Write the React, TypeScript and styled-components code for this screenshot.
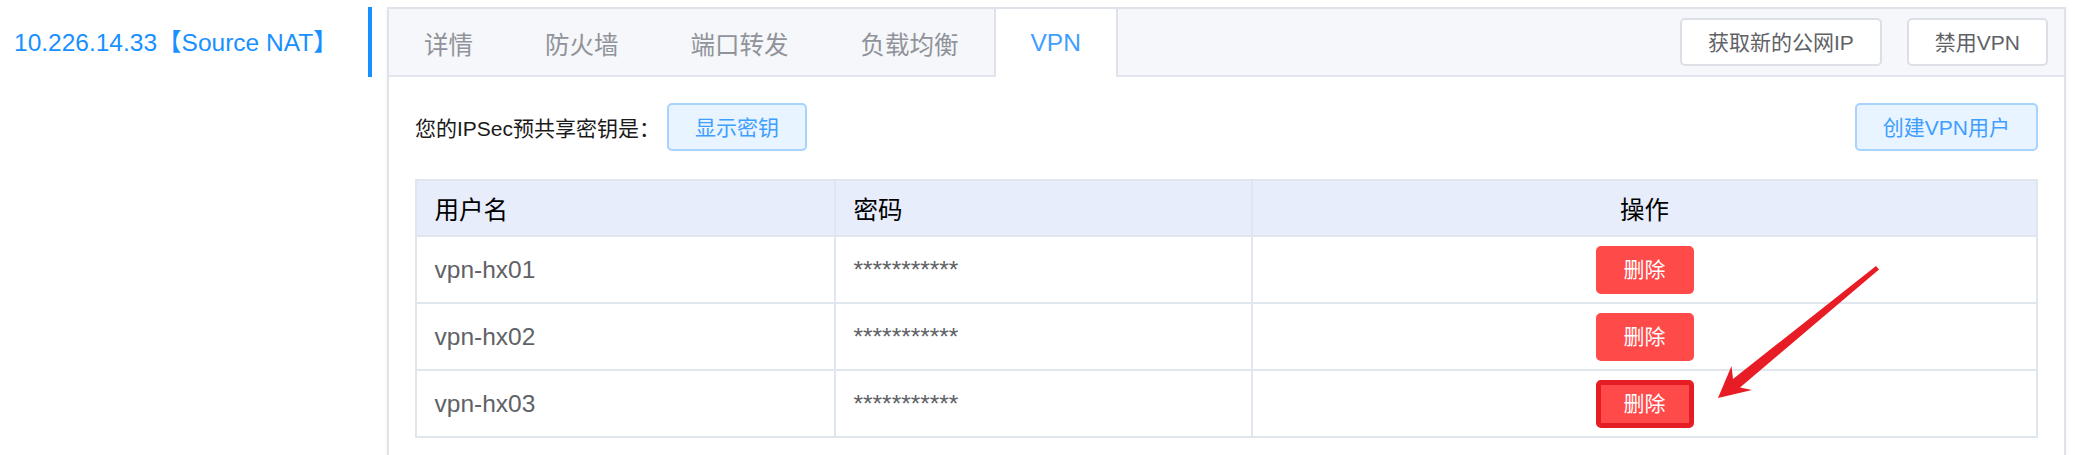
import React from 'react'
import styled, { createGlobalStyle, css } from 'styled-components'

const FONT = `"Liberation Sans", Arial, "Noto Sans CJK SC", sans-serif`

const GlobalStyle = createGlobalStyle`
    html, body {
        margin: 0;
        padding: 0;
        background: #ffffff;
        overflow: hidden;
        font-family: ${FONT};
    }
`

const Page = styled.div`
    position: relative;
    display: flex;
    align-items: flex-start;
    padding-top: 7px;
    width: 2075px;
    height: 455px;
    box-sizing: border-box;
`

const Sidebar = styled.nav`
    flex: none;
    width: 372px;
`

const MenuItem = styled.div<{ active?: boolean }>`
    height: 70px;
    box-sizing: border-box;
    display: flex;
    align-items: center;
    padding: 0 0 4px 14px;
    font-size: 24.5px;
    color: #1890ff;
    border-right: 4px solid ${p => (p.active ? '#1890ff' : 'transparent')};
    white-space: nowrap;
`

const Panel = styled.section`
    flex: 1;
    margin: 0 9px 0 15px;
    border: 2px solid #dfe2e8;
    background: #ffffff;
    box-shadow: 0 2px 4px rgba(0, 0, 0, 0.06);
`

const TabHeader = styled.div`
    display: flex;
    height: 68px;
    box-sizing: border-box;
    background: #f5f7fa;
    border-bottom: 2px solid #e2e5eb;
`

const TabList = styled.div`
    display: flex;
    height: 66px;
`

const Tab = styled.div<{ active?: boolean }>`
    height: 68px;
    box-sizing: border-box;
    display: flex;
    align-items: center;
    padding: 0 35px;
    margin-left: -2px;
    border-style: solid;
    border-width: 0 2px;
    border-color: transparent;
    font-size: 24.5px;
    color: #909399;
    white-space: nowrap;

    ${p =>
        p.active &&
        css`
            color: #409eff;
            background: #ffffff;
            border-color: #dfe2e8;
        `}
`

const HeaderActions = styled.div`
    margin-left: auto;
    align-self: center;
    display: flex;
    gap: 25px;
    padding-right: 16px;
`

const Button = styled.button`
    height: 48px;
    box-sizing: border-box;
    display: inline-flex;
    align-items: center;
    justify-content: center;
    padding: 0 26px;
    border: 2px solid #dcdfe6;
    border-radius: 5px;
    background: #ffffff;
    color: #606266;
    font-family: ${FONT};
    font-size: 21px;
    line-height: 1;
    white-space: nowrap;
    cursor: pointer;
`

const LightButton = styled(Button)`
    background: #e8f4ff;
    border-color: #a9d3ff;
    color: #409eff;
`

const DangerButton = styled(Button)<{ highlighted?: boolean }>`
    background: #ff4a4a;
    border-color: #ff4a4a;
    color: #ffffff;

    ${p =>
        p.highlighted &&
        css`
            border-color: #e61c24;
            box-shadow: inset 0 0 0 3px #e61c24;
        `}
`

const Content = styled.div`
    padding: 26px;
`

const KeyRow = styled.div`
    display: flex;
    align-items: center;
    justify-content: space-between;
    height: 48px;
`

const KeyGroup = styled.div`
    display: flex;
    align-items: center;
`

const KeyLabel = styled.span`
    font-size: 21px;
    color: #1a1a1a;
    margin-right: 7px;
    white-space: nowrap;
`

const UserTable = styled.div`
    margin-top: 28px;
    border: 2px solid #e0e6ee;
    border-bottom: none;
`

const Row = styled.div<{ head?: boolean }>`
    display: grid;
    grid-template-columns: 419px 417px 1fr;
    height: ${p => (p.head ? 56 : 67)}px;
    box-sizing: border-box;
    border-bottom: 2px solid #e0e6ee;
    background: ${p => (p.head ? '#e8edfc' : '#ffffff')};
    color: ${p => (p.head ? '#000000' : '#606266')};
`

const Cell = styled.div<{ center?: boolean; last?: boolean }>`
    display: flex;
    align-items: center;
    justify-content: ${p => (p.center ? 'center' : 'flex-start')};
    padding: 0 17.5px;
    box-sizing: border-box;
    border-right: ${p => (p.last ? 'none' : '2px solid #e0e6ee')};
    font-size: 24.5px;
    white-space: nowrap;
`

const Annotation = styled.svg`
    position: absolute;
    left: 0;
    top: 0;
    pointer-events: none;
`

const tabs = ['详情', '防火墙', '端口转发', '负载均衡', 'VPN']

const users = ['vpn-hx01', 'vpn-hx02', 'vpn-hx03']

const App = () => {
    return (
        <>
            <GlobalStyle />
            <Page>
                <Sidebar>
                    <MenuItem active>10.226.14.33【Source NAT】</MenuItem>
                </Sidebar>
                <Panel>
                    <TabHeader>
                        <TabList>
                            {tabs.map(t => (
                                <Tab key={t} active={t === 'VPN'}>
                                    {t}
                                </Tab>
                            ))}
                        </TabList>
                        <HeaderActions>
                            <Button>获取新的公网IP</Button>
                            <Button>禁用VPN</Button>
                        </HeaderActions>
                    </TabHeader>
                    <Content>
                        <KeyRow>
                            <KeyGroup>
                                <KeyLabel>您的IPSec预共享密钥是：</KeyLabel>
                                <LightButton>显示密钥</LightButton>
                            </KeyGroup>
                            <LightButton>创建VPN用户</LightButton>
                        </KeyRow>
                        <UserTable>
                            <Row head>
                                <Cell>用户名</Cell>
                                <Cell>密码</Cell>
                                <Cell center last>
                                    操作
                                </Cell>
                            </Row>
                            {users.map((u, i) => (
                                <Row key={u}>
                                    <Cell>{u}</Cell>
                                    <Cell>***********</Cell>
                                    <Cell center last>
                                        <DangerButton highlighted={i === users.length - 1}>删除</DangerButton>
                                    </Cell>
                                </Row>
                            ))}
                        </UserTable>
                    </Content>
                </Panel>
                {/* red arrow drawn over the screenshot */}
                <Annotation width="2075" height="455" viewBox="0 0 2075 455">
                    <polygon
                        points="1876,266 1879,269.5 1740,387.5 1752,390 1718,398 1731.5,366 1733,379"
                        fill="#e81c24"
                    />
                </Annotation>
            </Page>
        </>
    )
}

export default App
